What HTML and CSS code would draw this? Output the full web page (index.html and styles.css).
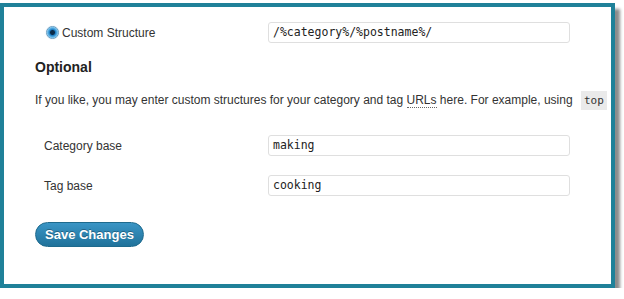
FILE: index.html
```html
<!DOCTYPE html>
<html lang="en">
<head>
    <meta charset="UTF-8">
    <title>Permalink Settings</title>
    <link rel="stylesheet" href="styles.css">
</head>
<body>

    <div class="frame">
        <div class="row structure-row">
            <label class="radio-label">
                <span class="radio"></span>
                Custom Structure
            </label>
            <div class="field">/%category%/%postname%/</div>
        </div>

        <h3 class="section-title">Optional</h3>
        <p class="intro">If you like, you may enter custom structures for your category and tag <abbr title="Universal Resource Locator">URLs</abbr> here. For example, using <code>top</code></p>

        <div class="row option-row">
            <div class="option-label">Category base</div>
            <div class="field">making</div>
        </div>
        <div class="row option-row">
            <div class="option-label">Tag base</div>
            <div class="field">cooking</div>
        </div>

        <div class="submit">
            <button class="button-primary">Save Changes</button>
        </div>
    </div>

</body>
</html>
```

FILE: styles.css
```css
body {
    font-family: 'Liberation Sans', Arial, sans-serif;
    font-size: 12px;
    color: #333;
    background: #fff;
    margin: 0;
    padding: 0;
}

.frame {
    margin-top: 3px;
    width: 576px;
    height: 277px;
    padding: 0 0 0 31px;
    border: 4px solid #1f8199;
    box-shadow: 5px 6px 3px #8c8c8c;
    overflow: hidden;
    background: #fff;
}

.row {
    display: flex;
    align-items: center;
}

.structure-row {
    margin-top: 15px;
}

.radio-label {
    display: flex;
    align-items: center;
    width: 222px;
    padding-left: 11px;
    font-size: 12px;
}

.radio {
    display: inline-block;
    width: 13px;
    height: 13px;
    border-radius: 50%;
    margin-right: 3px;
    border: 1px solid #6a9cc0;
    background: radial-gradient(circle, #0a2a48 0 2px, #1f7fc4 3px, #6fc0ee 5px, #e4f4fc 6px);
    box-shadow: 0 0 1px #9cc8e6;
    box-sizing: border-box;
}

.field {
    width: 302px;
    height: 21px;
    box-sizing: border-box;
    border: 1px solid #dfdfdf;
    border-radius: 3px;
    padding: 0 4px;
    font-family: 'DejaVu Sans Mono', 'Liberation Mono', monospace;
    font-size: 11.5px;
    line-height: 19px;
    color: #222;
    background: #fff;
}

.section-title {
    margin: 15px 0 0;
    font-size: 14px;
    font-weight: bold;
    line-height: 18px;
    color: #222;
}

.intro {
    margin: 16px 0 0;
    white-space: nowrap;
    font-size: 12px;
    line-height: 16px;
}

abbr {
    text-decoration: none;
    border-bottom: 1px dotted #666;
}

code {
    font-family: 'DejaVu Sans Mono', 'Liberation Mono', monospace;
    font-size: 11px;
    background: #eaeaea;
    padding: 3px 3px;
    margin-left: 5px;
}

.option-row {
    margin-top: 26px;
}

.option-row + .option-row {
    margin-top: 19px;
}

.option-label {
    width: 224px;
    padding-left: 9px;
    font-size: 12px;
}

.submit {
    margin-top: 26px;
}

.button-primary {
    font-family: 'Liberation Sans', Arial, sans-serif;
    font-size: 13px;
    font-weight: bold;
    color: #fff;
    height: 25px;
    padding: 0 9px;
    border: 1px solid #1e6a8d;
    border-radius: 13px;
    background: linear-gradient(#3a95c5, #20729b);
    text-shadow: 0 -1px 0 rgba(0, 0, 0, 0.3);
    cursor: pointer;
}
```
